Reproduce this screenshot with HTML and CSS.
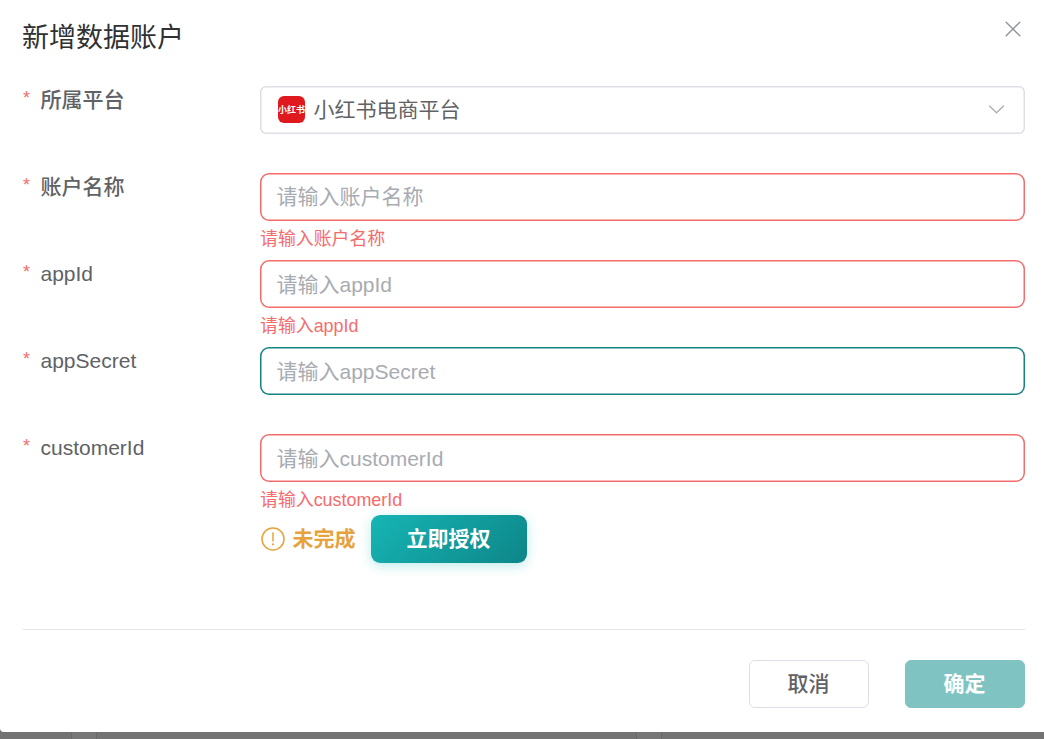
FILE: index.html
```
<!DOCTYPE html>
<html lang="zh-CN">
<head>
<meta charset="UTF-8">
<title>新增数据账户</title>
<link rel="stylesheet" href="styles.css">
</head>
<body>
<div class="dialog">
  <header class="header">
    <h1 class="title">新增数据账户</h1>
    <svg class="close" viewBox="0 0 16 16" fill="none" stroke="#909399" stroke-width="1.4" stroke-linecap="round"><path d="M1.2 1.2l13.6 13.6M14.8 1.2L1.2 14.8"/></svg>
  </header>
  <main class="form">
    <div class="row">
      <label class="label"><span class="star">*</span>所属平台</label>
      <div class="field">
        <div class="input select">
          <span class="logo"><span class="logo-text">小红书</span></span>
          <span class="value">小红书电商平台</span>
          <svg class="arrow" viewBox="0 0 17 9" fill="none" stroke="#a8abb2" stroke-width="1.2" stroke-linecap="round" stroke-linejoin="round"><path d="M1.5 1l7 6.8 7-6.8"/></svg>
        </div>
      </div>
    </div>
    <div class="row">
      <label class="label"><span class="star">*</span>账户名称</label>
      <div class="field">
        <div class="input error">请输入账户名称</div>
        <div class="message">请输入账户名称</div>
      </div>
    </div>
    <div class="row">
      <label class="label"><span class="star">*</span>appId</label>
      <div class="field">
        <div class="input error mixed">请输入appId</div>
        <div class="message">请输入appId</div>
      </div>
    </div>
    <div class="row">
      <label class="label"><span class="star">*</span>appSecret</label>
      <div class="field">
        <div class="input focus mixed">请输入appSecret</div>
      </div>
    </div>
    <div class="row last">
      <label class="label"><span class="star">*</span>customerId</label>
      <div class="field">
        <div class="input error mixed">请输入customerId</div>
        <div class="message">请输入customerId</div>
      </div>
    </div>
    <div class="auth">
      <svg class="warn" viewBox="0 0 24 24" fill="none" stroke="#e6a23c" stroke-width="1.5" stroke-linecap="round"><circle cx="12" cy="12" r="11"/><path d="M12 6v8"/><circle cx="12" cy="17.3" r="1.1" fill="#e6a23c" stroke="none"/></svg>
      <span class="status">未完成</span>
      <button class="authorize">立即授权</button>
    </div>
  </main>
  <footer class="footer">
    <button class="btn">取消</button>
    <button class="btn primary">确定</button>
  </footer>
</div>
<div class="backdrop"><i class="strip first"></i><i class="strip second"></i></div>
</body>
</html>
```
FILE: styles.css
```
* { box-sizing: border-box; }
body {
  margin: 0;
  height: 739px;
  overflow: hidden;
  background: #737373;
  color: #606266;
  font-family: "Liberation Sans", "Noto Sans CJK SC", sans-serif;
  font-size: 21px;
}
.dialog {
  height: 732px;
  padding: 0 19px 0 23px;
  background: #fff;
  border-bottom-left-radius: 4px;
}
.header {
  display: flex;
  justify-content: space-between;
  height: 86px;
}
.title {
  margin: 20px 0 0 -1px;
  color: #303133;
  font-size: 27px;
  font-weight: 400;
  line-height: 36px;
}
.close { width: 16px; height: 16px; margin: 21px 4px 0 0; }
.form { height: 543px; }
.row { display: flex; height: 87px; }
.last { height: 81px; }
.label {
  display: flex;
  width: 237px;
  height: 28px;
  gap: 9.5px;
  font-weight: 500;
  line-height: 28px;
}
.star { width: 8px; color: #f56c6c; font-size: 18px; font-weight: 400; line-height: 25px; }
.field { flex: 1; }
.input {
  height: 48px;
  padding: 1px 16.5px;
  border-radius: 9px;
  box-shadow: inset 0 0 0 1.5px #dcdfe6;
  color: #a8abb2;
  line-height: 45px;
}
.mixed { line-height: 47px; }
.error { box-shadow: inset 0 0 0 1.5px #f56c6c; }
.focus { box-shadow: inset 0 0 0 1.5px #138281; }
.select { display: flex; align-items: center; border-radius: 6px; padding: 0 20px 1px 18px; }
.logo {
  display: flex;
  align-items: center;
  justify-content: center;
  width: 27px;
  height: 27px;
  margin-right: 8.5px;
  border-radius: 6px;
  background: #e0191e;
}
.logo-text { color: #fff; font-size: 9px; font-weight: 700; line-height: 12px; white-space: nowrap; }
.value { flex: 1; color: #606266; line-height: 44px; }
.arrow { width: 17px; height: 9px; }
.message { margin-top: 5px; color: #f56c6c; font-size: 17.9px; line-height: 27px; }
.auth { display: flex; align-items: center; padding-left: 238px; }
.warn { width: 24px; height: 24px; }
.status { margin-left: 7.5px; width: 78.5px; padding-bottom: 4px; color: #e6a23c; font-weight: 700; }
button { padding: 0 1px 5px 0; border: 0; font-family: inherit; font-size: 21px; }
.authorize {
  width: 156px;
  height: 48px;
  border-radius: 9px;
  color: #fff;
  font-weight: 700;
  background: linear-gradient(135deg, #17b5b5, #0d8688);
  box-shadow: 0 3px 12px rgba(23, 181, 181, .28);
}
.footer {
  display: flex;
  justify-content: flex-end;
  gap: 36px;
  padding-top: 30px;
  border-top: 1px solid #e4e4e4;
}
.btn {
  width: 120px;
  height: 48px;
  border: 1px solid #dcdfe6;
  border-radius: 6px;
  background: #fff;
  color: #606266;
  font-weight: 500;
}
.primary { border-color: #7fc4c2; background: #7fc4c2; color: #fff; font-weight: 700; }
.backdrop { display: flex; height: 7px; }
.strip { width: 26px; height: 7px; border: solid #696969; border-width: 0 1px; background: #777; }
.first { margin-left: 71px; }
.second { margin-left: 539px; }
```
